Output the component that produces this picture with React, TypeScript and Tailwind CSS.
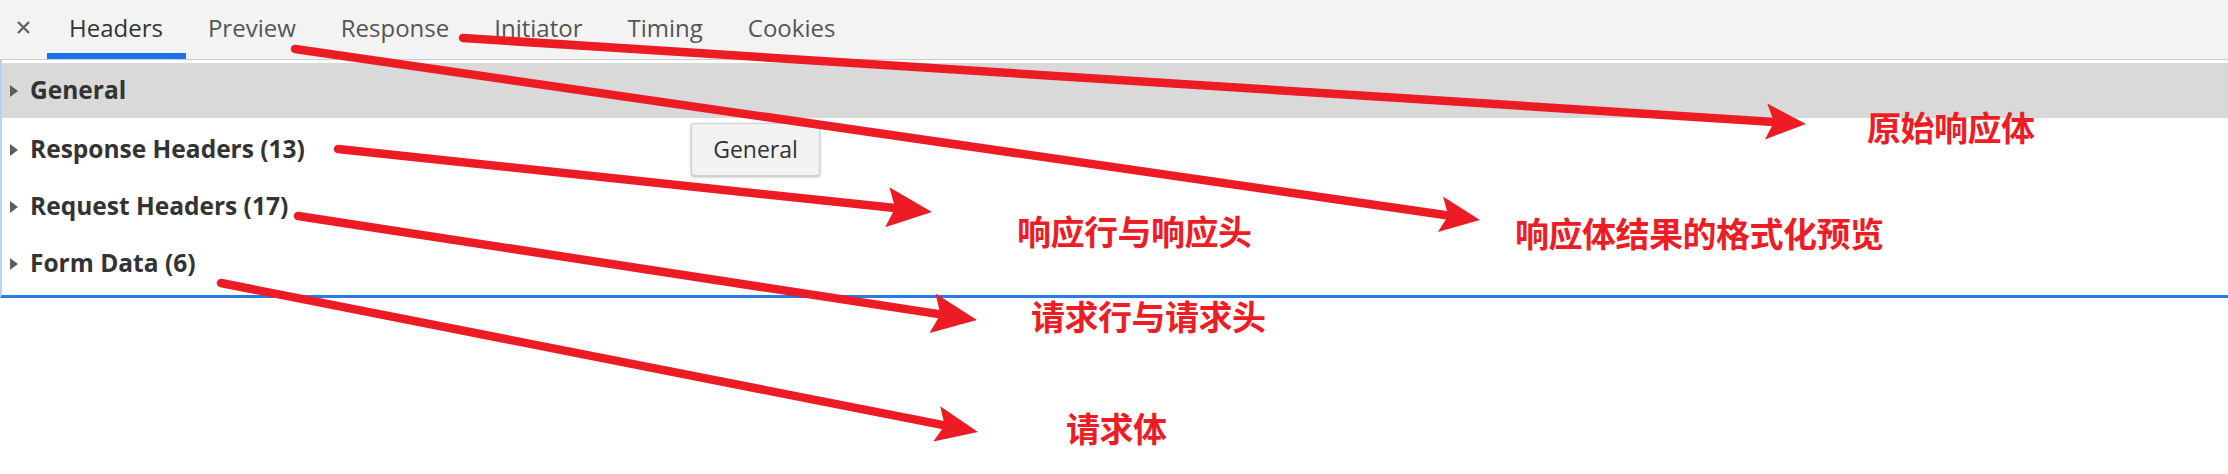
import React from 'react'

const tabs = ['Headers', 'Preview', 'Response', 'Initiator', 'Timing', 'Cookies']

const sections = ['Response Headers (13)', 'Request Headers (17)', 'Form Data (6)']

// annotation arrows, start point -> tip
const arrows = [
    { x1: 463, y1: 38, x2: 1806, y2: 124, len: 40, hw: 18 },
    { x1: 295, y1: 49, x2: 1480, y2: 220, len: 40, hw: 18 },
    { x1: 338, y1: 149, x2: 932, y2: 212, len: 45, hw: 20 },
    { x1: 298, y1: 216, x2: 977, y2: 320, len: 45, hw: 20 },
    { x1: 221, y1: 283, x2: 978, y2: 432, len: 42, hw: 18 },
]

const Triangle = () => (
    <svg width="10" height="14" viewBox="0 0 10 14" className="shrink-0">
        <polygon points="1,1 9,7 1,13" fill="#5e5e5e" />
    </svg>
)

const Arrow = ({ x1, y1, x2, y2, len, hw }: { x1: number; y1: number; x2: number; y2: number; len: number; hw: number }) => {
    const dx = x2 - x1
    const dy = y2 - y1
    const d = Math.hypot(dx, dy)
    const ux = dx / d
    const uy = dy / d
    const nx = -uy
    const ny = ux
    const bx = x2 - ux * len
    const by = y2 - uy * len
    const notchX = x2 - ux * (len - 8)
    const notchY = y2 - uy * (len - 8)
    const pts = [
        [x2, y2],
        [bx + nx * hw, by + ny * hw],
        [notchX, notchY],
        [bx - nx * hw, by - ny * hw],
    ].map(p => p.join(',')).join(' ')
    return (
        <g>
            <line x1={x1} y1={y1} x2={notchX} y2={notchY} stroke="#ed1c24" strokeWidth="8.5" strokeLinecap="round" />
            <polygon points={pts} fill="#ed1c24" />
        </g>
    )
}

const Label = ({ text, className }: { text: string; className: string }) => (
    <div className={`absolute text-[34px] leading-[34px] font-bold text-[#ee1c25] whitespace-nowrap tracking-[-0.5px] ${className}`}
        style={{ fontFamily: '"Noto Sans CJK SC", "Noto Sans", sans-serif' }}>
        {text}
    </div>
)

const App = () => {
    return (
        <div className="relative w-[2228px] h-[474px] bg-white overflow-hidden" style={{ fontFamily: '"Open Sans", "Noto Sans", sans-serif' }}>
            {/* tab strip */}
            <div className="flex h-[60px] bg-[#f3f3f3] border-b border-[#cbcbcb]">
                <div className="w-[47px] flex items-center justify-center pb-[4px]">
                    <svg width="15" height="15" viewBox="0 0 15 15">
                        <path d="M2 2 L13 13 M13 2 L2 13" stroke="#5f6368" strokeWidth="2.4" />
                    </svg>
                </div>
                {tabs.map((tab, i) => (
                    <div key={tab}
                        className={`h-full flex items-center pl-[22px] pr-[23px] pt-[2px] border-b-[6px] text-[24px] leading-none ${i === 0 ? 'border-[#1a73e8] text-[#333]' : 'border-transparent text-[#555]'}`}>
                        {tab}
                    </div>
                ))}
            </div>

            {/* headers panel */}
            <div className="pt-[3px] pb-[3px] border-l-2 border-l-[#b9d3f8] border-b-[3px] border-b-[#2a7ae4]">
                <div className="h-[55px] mb-[3px] bg-[#d9d9d9] flex items-center gap-[11px] pl-[7px]">
                    <Triangle />
                    <span className="text-[24.5px] font-bold text-[#333] leading-none">General</span>
                </div>
                {sections.map(s => (
                    <div key={s} className="h-[57px] flex items-center gap-[11px] pl-[7px]">
                        <Triangle />
                        <span className="text-[24.5px] font-bold text-[#333] leading-none">{s}</span>
                    </div>
                ))}
            </div>

            {/* tooltip */}
            <div className="absolute left-[691px] top-[123px] w-[129px] h-[53px] flex items-center justify-center bg-[#f2f2f2] border border-[#cfcfcf] rounded-[3px] shadow-[0_1px_3px_rgba(0,0,0,0.3)] text-[23px] text-[#333]">
                General
            </div>

            {/* annotations */}
            <svg className="absolute inset-0 pointer-events-none" width="2228" height="474">
                {arrows.map((a, i) => <Arrow key={i} {...a} />)}
            </svg>
            <Label text="原始响应体" className="left-[1867px] top-[110px]" />
            <Label text="响应体结果的格式化预览" className="left-[1515px] top-[216px]" />
            <Label text="响应行与响应头" className="left-[1017px] top-[214px]" />
            <Label text="请求行与请求头" className="left-[1031px] top-[299px]" />
            <Label text="请求体" className="left-[1066px] top-[411px]" />
        </div>
    )
}

export default App
